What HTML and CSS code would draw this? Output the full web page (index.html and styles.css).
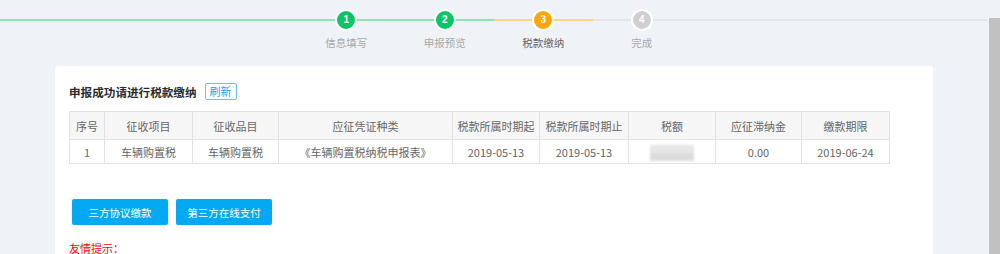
FILE: index.html
```html
<!DOCTYPE html>
<html lang="zh-CN">
<head>
    <meta charset="UTF-8">
    <meta name="viewport" content="width=device-width, initial-scale=1.0">
    <title>税款缴纳</title>
    <link rel="stylesheet" href="styles.css">
</head>
<body>
    <div class="page">
        <div class="main">
            <div class="steps">
                <div class="lead done"></div>
                <div class="step done">
                    <span class="dot">1</span>
                    <span class="label">信息填写</span>
                </div>
                <div class="step done">
                    <span class="dot">2</span>
                    <span class="label">申报预览</span>
                </div>
                <div class="step active">
                    <span class="dot">3</span>
                    <span class="label">税款缴纳</span>
                </div>
                <div class="step">
                    <span class="dot">4</span>
                    <span class="label">完成</span>
                </div>
                <div class="tail"></div>
            </div>

            <div class="card">
                <div class="card-title">
                    <h3>申报成功请进行税款缴纳</h3>
                    <button class="btn-refresh">刷新</button>
                </div>

                <table class="tax-table">
                    <colgroup>
                        <col style="width: 35px">
                        <col style="width: 88px">
                        <col style="width: 86px">
                        <col style="width: 174px">
                        <col style="width: 87px">
                        <col style="width: 89px">
                        <col style="width: 87px">
                        <col style="width: 86px">
                        <col style="width: 88px">
                    </colgroup>
                    <thead>
                        <tr>
                            <th>序号</th>
                            <th>征收项目</th>
                            <th>征收品目</th>
                            <th>应征凭证种类</th>
                            <th>税款所属时期起</th>
                            <th>税款所属时期止</th>
                            <th>税额</th>
                            <th>应征滞纳金</th>
                            <th>缴款期限</th>
                        </tr>
                    </thead>
                    <tbody>
                        <tr>
                            <td>1</td>
                            <td>车辆购置税</td>
                            <td>车辆购置税</td>
                            <td>《车辆购置税纳税申报表》</td>
                            <td>2019-05-13</td>
                            <td>2019-05-13</td>
                            <td><span class="masked"></span></td>
                            <td>0.00</td>
                            <td>2019-06-24</td>
                        </tr>
                    </tbody>
                </table>

                <div class="actions">
                    <button class="btn-pay">三方协议缴款</button>
                    <button class="btn-pay">第三方在线支付</button>
                </div>

                <p class="tip">友情提示：</p>
            </div>
        </div>
        <div class="scrollbar"><div class="thumb"></div></div>
    </div>
</body>
</html>
```

FILE: styles.css
```css
html, body {
    margin: 0;
    height: 100%;
    overflow: hidden;
}
body {
    font-family: "Microsoft YaHei", "Noto Sans CJK SC", "Noto Sans", sans-serif;
    background-color: #eff3f8;
    color: #666;
}
.page {
    display: flex;
    height: 100%;
}
.main {
    flex: 1;
}
.scrollbar {
    width: 12px;
    padding-top: 18px;
    padding-left: 1px;
    box-sizing: border-box;
}
.thumb {
    height: 100%;
    background: #c1c1c1;
}

/* steps */
.steps {
    display: flex;
    height: 66px;
    margin-right: 1px;
}
.lead {
    flex: 0 0 297px;
}
.tail {
    flex: 1;
}
.lead, .tail, .step {
    position: relative;
}
.lead::before, .tail::before, .step::before {
    content: "";
    position: absolute;
    left: 0;
    right: 0;
    top: 19px;
    height: 2px;
    background: #e3e5e8;
}
.done::before {
    background: #8fe3b5;
}
.active::before {
    background: #ffd285;
}
.step {
    width: 98.5px;
    display: flex;
    flex-direction: column;
    align-items: center;
}
.dot {
    position: relative;
    margin-top: 9px;
    width: 18px;
    height: 18px;
    line-height: 18px;
    border: 2px solid #fff;
    border-radius: 50%;
    background: #cfcfcf;
    color: #fff;
    text-align: center;
    font-family: "Liberation Sans", Arial, sans-serif;
    font-size: 10px;
    font-weight: bold;
}
.done .dot {
    background: #0bc466;
}
.active .dot {
    background: #fca600;
}
.label {
    margin-top: 5px;
    font-size: 10.5px;
    line-height: 14px;
    color: #a8a8a8;
}
.active .label {
    color: #666;
}

/* card */
.card {
    margin: 0 55px 0 55px;
    padding: 17px 14px 20px;
    background: #fff;
    border-radius: 4px;
    min-height: 200px;
}
.card-title {
    display: flex;
    align-items: center;
    gap: 8px;
    height: 17px;
}
.card-title h3 {
    margin: 0;
    font-size: 11.6px;
    font-weight: bold;
    color: #2b2b2b;
}
.btn-refresh {
    height: 17px;
    padding: 0 4px;
    border: 1px solid #6cc0f3;
    border-radius: 2px;
    background: #fff;
    color: #2a9ef0;
    font-family: inherit;
    font-size: 11px;
    line-height: 15px;
}
.tax-table {
    margin-top: 11px;
    width: 820px;
    border-collapse: collapse;
    table-layout: fixed;
    font-size: 11px;
}
.tax-table th, .tax-table td {
    border: 1px solid #e2e2e2;
    padding: 0;
    text-align: center;
    color: #666;
    white-space: nowrap;
}
.tax-table th {
    height: 27px;
    font-weight: normal;
    background: #f6f6f6;
}
.tax-table td {
    height: 23px;
}
.masked {
    display: inline-block;
    width: 44px;
    height: 16px;
    vertical-align: middle;
    background: linear-gradient(#e6e6e6 50%, #dcdcdc 50%);
    filter: blur(1px);
}
.actions {
    display: flex;
    gap: 8px;
    margin-top: 35px;
    padding-left: 3px;
}
.btn-pay {
    width: 96px;
    height: 26px;
    border: none;
    border-radius: 2px;
    background: #03aaf3;
    color: #fff;
    font-family: inherit;
    font-size: 10.5px;
}
.tip {
    margin: 16px 0 0;
    font-size: 11px;
    line-height: 14px;
    color: #f00;
}
```
